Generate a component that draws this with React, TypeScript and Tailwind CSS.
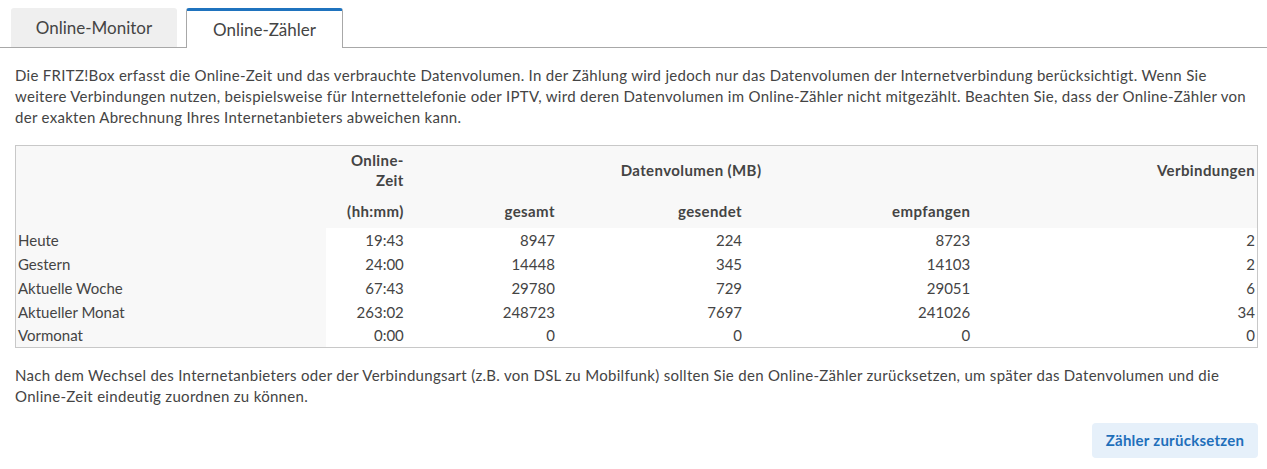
import React from 'react';

const rows = [
  { label: 'Heute', time: '19:43', total: '8947', sent: '224', received: '8723', conn: '2' },
  { label: 'Gestern', time: '24:00', total: '14448', sent: '345', received: '14103', conn: '2' },
  { label: 'Aktuelle Woche', time: '67:43', total: '29780', sent: '729', received: '29051', conn: '6' },
  { label: 'Aktueller Monat', time: '263:02', total: '248723', sent: '7697', received: '241026', conn: '34' },
  { label: 'Vormonat', time: '0:00', total: '0', sent: '0', received: '0', conn: '0' },
];

const App: React.FC = () => {
  return (
    <div
      className="w-[1267px] h-[469px] bg-white text-[#444] overflow-hidden"
      style={{ fontFamily: 'Lato, "Liberation Sans", sans-serif' }}
    >
      {/* Tabs */}
      <div className="flex items-end h-[48px] pl-[11px] gap-[9px] border-b border-[#a8a8a8]">
        <button className="w-[166px] h-[39px] bg-[#efefef] rounded-t-[3px] text-[17px] text-[#444]">
          Online-Monitor
        </button>
        <button className="w-[157px] h-[40px] -mb-px bg-white rounded-t-[3px] border-t-[3px] border-t-[#1f73be] border-x border-x-[#a8a8a8] text-[17px] text-[#444]">
          Online-Zähler
        </button>
      </div>

      <div className="pl-[15px] pr-[9px]">
        <p className="mt-[17px] text-[15px] leading-[21px] tracking-[0.3px]">
          Die FRITZ!Box erfasst die Online-Zeit und das verbrauchte Datenvolumen. In der Zählung wird jedoch nur das Datenvolumen der Internetverbindung berücksichtigt. Wenn Sie weitere Verbindungen nutzen, beispielsweise für Internettelefonie oder IPTV, wird deren Datenvolumen im Online-Zähler nicht mitgezählt. Beachten Sie, dass der Online-Zähler von der exakten Abrechnung Ihres Internetanbieters abweichen kann.
        </p>

        <table className="mt-[17px] w-[1243px] table-fixed border-collapse border border-[#c8c8c8] text-[15px]">
          <colgroup>
            <col className="w-[310px]" />
            <col className="w-[82px]" />
            <col className="w-[151px]" />
            <col className="w-[187px]" />
            <col className="w-[228px]" />
            <col className="w-[283px]" />
          </colgroup>
          <thead className="bg-[#f8f8f8] font-bold tracking-[0.4px]">
            <tr className="h-[48px]">
              <th />
              <th className="text-right pr-[4px] leading-[20px] font-bold">
                Online-
                <br />
                Zeit
              </th>
              <th colSpan={3} className="text-center leading-[20px] font-bold">
                Datenvolumen (MB)
              </th>
              <th className="text-right pr-[2px] leading-[20px] font-bold">Verbindungen</th>
            </tr>
            <tr className="h-[34px]">
              <th />
              <th className="text-right pr-[4px] leading-[20px] font-bold">(hh:mm)</th>
              <th className="text-right pr-[4px] leading-[20px] font-bold">gesamt</th>
              <th className="text-right pr-[4px] leading-[20px] font-bold">gesendet</th>
              <th className="text-right pr-[4px] leading-[20px] font-bold">empfangen</th>
              <th />
            </tr>
          </thead>
          <tbody>
            {rows.map(r => (
              <tr key={r.label} className="h-[24px] leading-[20px]">
                <td className="bg-[#f8f8f8] pl-[2px]">{r.label}</td>
                <td className="text-right pr-[4px]">{r.time}</td>
                <td className="text-right pr-[4px]">{r.total}</td>
                <td className="text-right pr-[4px]">{r.sent}</td>
                <td className="text-right pr-[4px]">{r.received}</td>
                <td className="text-right pr-[2px]">{r.conn}</td>
              </tr>
            ))}
          </tbody>
        </table>

        <p className="mt-[17px] text-[15px] leading-[21px] tracking-[0.3px]">
          Nach dem Wechsel des Internetanbieters oder der Verbindungsart (z.B. von DSL zu Mobilfunk) sollten Sie den Online-Zähler zurücksetzen, um später das Datenvolumen und die Online-Zeit eindeutig zuordnen zu können.
        </p>

        <div className="flex justify-end mt-[16px]">
          <button className="w-[166px] h-[35px] rounded-[4px] bg-[#e6f0fa] text-[#1f6fba] font-bold text-[15px] tracking-[0.25px]">
            Zähler zurücksetzen
          </button>
        </div>
      </div>
    </div>
  );
};

export default App;
